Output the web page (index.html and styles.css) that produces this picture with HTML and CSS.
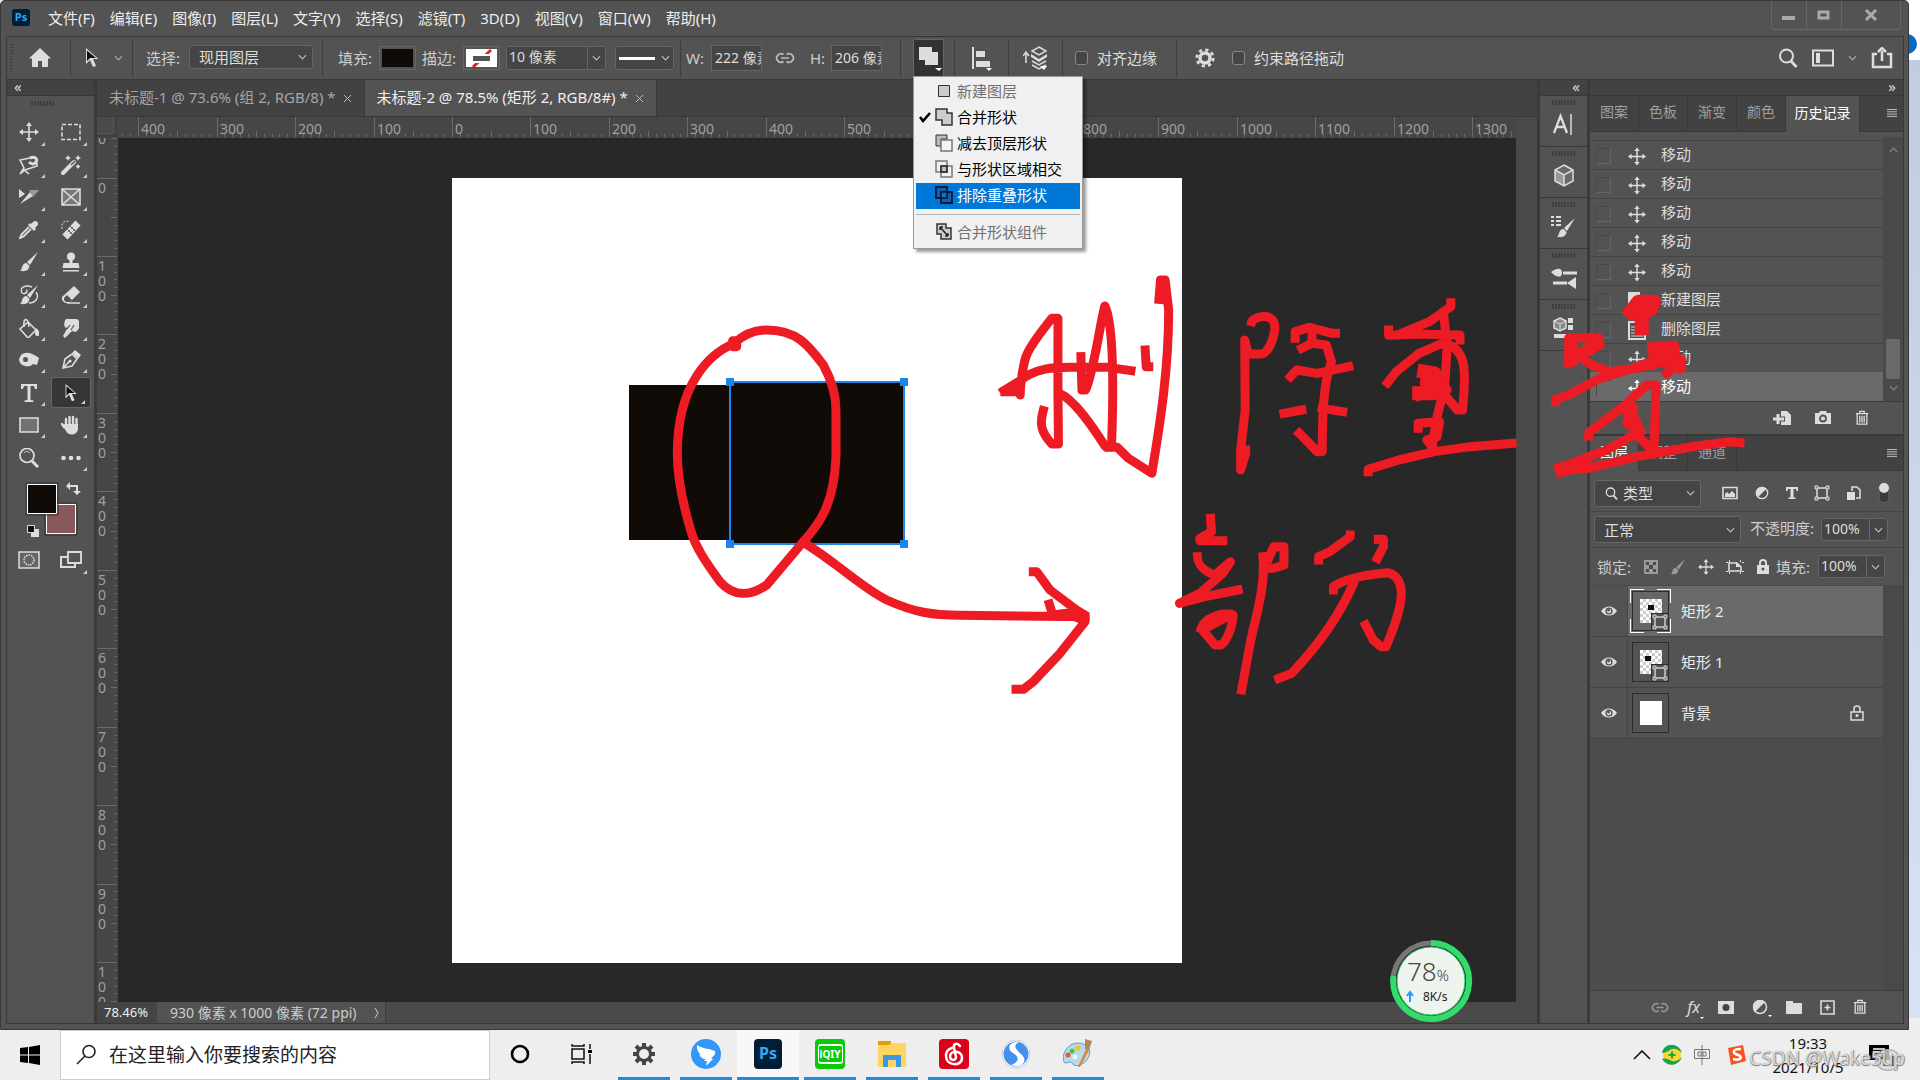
FILE: index.html
```html
<!DOCTYPE html>
<html lang="zh-CN">
<head>
<meta charset="utf-8">
<title>未标题-2 @ 78.5%</title>
<link rel="stylesheet" href="styles.css">
</head>
<body>
<svg class="defs" aria-hidden="true">
  <symbol id="chev" viewBox="0 0 10 6"><path d="M1 1l4 4 4-4" fill="none" stroke="currentColor" stroke-width="1.3"/></symbol>
  <symbol id="move" viewBox="0 0 20 20"><path d="M10 3v14M3 10h14" stroke="currentColor" stroke-width="1.6"/><path d="M10 0l3 4H7zM10 20l3-4H7zM0 10l4-3v6zM20 10l-4-3v6z" fill="currentColor"/></symbol>
  <symbol id="burger" viewBox="0 0 10 8"><path d="M0 .5h10M0 2.8h10M0 5.1h10M0 7.4h10" stroke="currentColor"/></symbol>
  <symbol id="eye" viewBox="0 0 16 12"><path d="M0 6C4 0 12 0 16 6 12 12 4 12 0 6z" fill="currentColor"/><circle cx="8" cy="6" r="3.6" fill="#535353"/><circle cx="8" cy="6" r="2.2" fill="currentColor"/><circle cx="7.600" cy="5" r="1.400" fill="#535353"/></symbol>
  <symbol id="frame" viewBox="0 0 16 16"><path d="M3 3h10v10H3z" fill="none" stroke="currentColor" stroke-width="1.5"/><path d="M1 1h3v3H1zM12 1h3v3h-3zM1 12h3v3H1zM12 12h3v3h-3z" fill="#777" stroke="currentColor"/></symbol>
  <symbol id="trash" viewBox="0 0 16 18"><path d="M1 4h14M5.500 4V1.500h5V4M2.500 4v12h11V4M5.500 6.500v7.500M8 6.500v7.500M10.500 6.500v7.500" fill="none" stroke="currentColor" stroke-width="1.500"/></symbol>
  <symbol id="half" viewBox="0 0 16 16"><circle cx="8" cy="8" r="6.500" fill="none" stroke="currentColor" stroke-width="1.500"/><path d="M13 3A7 7 0 0 0 3 13z" fill="currentColor"/></symbol>
  <symbol id="link" viewBox="0 0 20 12"><path d="M8.500 2.500A4.300 4.300 0 1 0 8.500 9.500M11.500 2.500a4.300 4.300 0 1 1 0 7M6 6h8" fill="none" stroke="currentColor" stroke-width="1.700"/></symbol>
  <symbol id="brush" viewBox="0 0 20 20"><path d="M19 0L8 10l3 3zM7.500 11c-3 0-4 2.500-4.500 4.500-.5 1.500-1 2.500-2 3 4 1.500 9 .5 9.500-4.500z" fill="currentColor"/></symbol>
  <symbol id="arrow" viewBox="0 0 16 22"><path d="M2 1v16l4-4 3 7 3-1-3-7h5.500z" fill="#ddd"/><path d="M3 3.500v10.500l3-3h6z" fill="#111"/></symbol>
  <symbol id="search" viewBox="0 0 20 20"><circle cx="8.500" cy="8" r="6.500" fill="none" stroke="currentColor" stroke-width="2"/><path d="M13 13l5.500 6" stroke="currentColor" stroke-width="2.800"/></symbol>
  <symbol id="gear" viewBox="0 0 20 20"><circle cx="10" cy="10" r="5" fill="none" stroke="currentColor" stroke-width="3.500"/><circle cx="10" cy="10" r="8.200" fill="none" stroke="currentColor" stroke-width="2.800" stroke-dasharray="3.220 3.220"/></symbol>
</svg>

<main class="desktop">
<div class="window">
  <header class="titlebar">
    <span class="ps-logo">Ps</span>
    <nav class="menus">
      <button>文件(F)</button><button>编辑(E)</button><button>图像(I)</button><button>图层(L)</button><button>文字(Y)</button><button>选择(S)</button><button>滤镜(T)</button><button>3D(D)</button><button>视图(V)</button><button>窗口(W)</button><button>帮助(H)</button>
    </nav>
    <div class="controls">
      <button aria-label="最小化"><svg width="14" height="14"><path d="M0 8h13v4H0z" fill="#aaa"/></svg></button>
      <button aria-label="最大化"><svg width="14" height="12"><path d="M2 3h9v6H2z" fill="none" stroke="#aaa" stroke-width="3"/></svg></button>
      <button aria-label="关闭" class="close"><svg width="14" height="12"><path d="M2 1l10 10M12 1L2 11" stroke="#aaa" stroke-width="3"/></svg></button>
    </div>
  </header>

  <div class="options">
    <div class="grp g-home"><i class="vgrip"></i><button aria-label="主页"><svg width="22" height="20" viewBox="0 0 22 20"><path d="M11 0L0 10.500h3V19h6v-6h4v6h6v-8.500h3z" fill="#ddd"/></svg></button></div>
    <div class="grp g-tool"><svg width="16" height="22"><use href="#arrow"/></svg><svg class="dim" width="9" height="6"><use href="#chev"/></svg></div>
    <div class="grp g-select"><label for="scope">选择:</label><span class="sel"><select id="scope"><option>现用图层</option></select><svg width="9" height="6"><use href="#chev"/></svg></span></div>
    <div class="grp g-fill">
      <label>填充:</label><button class="chip" aria-label="填充颜色"><i class="ink"></i></button>
      <label>描边:</label><button class="chip" aria-label="描边颜色"><svg width="31" height="18"><path d="M0 0h31v18H0z" fill="#fff"/><path d="M25 1L7 18" stroke="#e0222c" stroke-width="3"/><path d="M5 5h21v9H5z" fill="#fff"/><path d="M7 7h17v5H7z" fill="#555"/></svg></button>
      <span class="combo w-stroke"><input aria-label="描边宽度" value="10 像素"><button aria-label="展开"><svg width="9" height="6"><use href="#chev"/></svg></button></span>
      <button class="linestyle" aria-label="描边类型"><i></i><svg width="9" height="6"><use href="#chev"/></svg></button>
    </div>
    <div class="grp g-size"><label for="w">W:</label><input id="w" value="222 像素"><svg class="lnk" width="20" height="12"><use href="#link"/></svg><label for="h">H:</label><input id="h" value="206 像素"></div>
    <div class="grp g-op">
      <button class="opbtn" aria-label="路径操作"><svg width="30" height="32"><path d="M5 5h13v5h6v13H11v-5H5z" fill="#ddd"/><path d="M21 26h7l-3 3z" fill="#fff"/></svg></button>
      <menu class="popup">
        <li class="off"><svg width="18" height="18"><path d="M3.500 3.500h11v11h-11z" fill="#ccc" stroke="#333"/></svg>新建图层</li>
        <li><svg class="tick" width="12" height="12"><path d="M1 6l3 4 7-8" fill="none" stroke="#000" stroke-width="2.600"/></svg><svg width="18" height="18"><path d="M1 1h11v4h5v12H7v-5H1z" fill="#ccc" stroke="#333" stroke-width="1.500"/></svg>合并形状</li>
        <li><svg width="18" height="18"><path d="M1 1h11v4H6v7H1z" fill="#bbb" stroke="#333"/><path d="M6 6h11v11H6z" fill="#f4f4f4" stroke="#777" stroke-width="1.500"/></svg>减去顶层形状</li>
        <li><svg width="18" height="18"><path d="M1 1h11v11H1zM6 6h11v11H6z" fill="none" stroke="#777" stroke-width="1.500"/><path d="M6 6h6v6H6z" fill="#bbb" stroke="#222" stroke-width="1.500"/></svg>与形状区域相交</li>
        <li class="on"><svg width="18" height="18"><path d="M1 1h11v11H1zM6 6h11v11H6z" fill="#1260ae" stroke="#061c38" stroke-width="1.800"/><path d="M6 6h6v6H6z" fill="#0078d7" stroke="#061c38" stroke-width="1.500"/></svg>排除重叠形状</li>
        <li class="rule"></li>
        <li class="off"><svg width="18" height="18"><path d="M2 1h9v4h5v11H6v-5H2z" fill="#ccc" stroke="#333" stroke-width="1.500"/><path d="M5 4l8 9M5 4v3M5 4h3M13 13v-3M13 13h-3" stroke="#222" stroke-width="1.500"/></svg>合并形状组件</li>
      </menu>
    </div>
    <div class="grp g-icon"><button aria-label="路径对齐方式"><svg width="22" height="28" viewBox="0 0 22 28"><path d="M2 3v22" stroke="#ddd" stroke-width="2"/><path d="M5 7h9v6H5zM5 17h14v6H5z" fill="#ddd"/><path d="M15 24h6l-3 3z" fill="#fff"/></svg></button></div>
    <div class="grp g-icon"><button aria-label="路径排列方式"><svg width="26" height="26" viewBox="0 0 26 26"><path d="M3 18V9M0 11l3-4 3 4" fill="none" stroke="#ddd" stroke-width="1.500"/><path d="M16 2l7 4-7 4-7-4z" fill="none" stroke="#ddd" stroke-width="1.500"/><path d="M8 9l8 5 8-5v3l-8 5-8-5z" fill="#ddd"/><path d="M9 16l7 4 7-4M9 20l7 4 7-4" fill="none" stroke="#ddd" stroke-width="1.500"/><path d="M17 21h7l-3 4z" fill="#fff"/></svg></button></div>
    <div class="grp g-check"><label><input type="checkbox">对齐边缘</label></div>
    <div class="grp g-last"><svg width="20" height="20" class="lite"><use href="#gear"/></svg><label><input type="checkbox">约束路径拖动</label></div>
    <div class="opt-right">
      <button aria-label="搜索"><svg width="20" height="20"><use href="#search"/></svg></button>
      <button aria-label="工作区"><svg width="22" height="18"><path d="M1 1.500h20v15H1z" fill="none" stroke="#ddd" stroke-width="2"/><path d="M4 4h4v10H4z" fill="#ddd"/></svg></button>
      <svg class="dim" width="9" height="6"><use href="#chev"/></svg>
      <button aria-label="共享"><svg width="22" height="22"><path d="M6 7H2v13h18V7h-4" fill="none" stroke="#ddd" stroke-width="2.500"/><path d="M11 14V4M7 5l4-4 4 4" fill="none" stroke="#ddd" stroke-width="2.500"/></svg></button>
    </div>
  </div>

  <div class="work">
    <aside class="tools">
      <div class="strip left">«</div>
      <i class="hgrip"></i>
      <div class="toolgrid">
        <button aria-label="移动"><svg viewBox="0 0 20 20"><use href="#move"/></svg></button>
        <button aria-label="矩形选框"><svg viewBox="0 0 20 20"><path d="M1 2.500h18v15H1z" fill="none" stroke="#ddd" stroke-width="1.600" stroke-dasharray="4 2"/></svg></button>
        <button aria-label="磁性套索"><svg viewBox="0 0 20 20"><path d="M11 3L1 5l4 8-4 6 5-4 6-2 6-2V8M4 14l6 5" fill="none" stroke="#ddd" stroke-width="1.600"/><path d="M11 3c5-2 8 1 6 4s-5 2-7 0" fill="none" stroke="#ddd" stroke-width="3"/></svg></button>
        <button aria-label="魔棒"><svg viewBox="0 0 20 20"><path d="M2 18L13 7" stroke="#ddd" stroke-width="4" stroke-linecap="round"/><path d="M10 10l4-4" stroke="#555" stroke-width="1.500"/><path d="M7 0l1 2 2 1-2 1-1 2-1-2-2-1 2-1zM17 0l1 2 2 1-2 1-1 2-1-2-2-1 2-1zM17 9l1 1.500 1.500 1-1.500 1-1 1.500-1-1.500-1.500-1 1.500-1z" fill="#ddd"/></svg></button>
        <button aria-label="切片选择"><svg viewBox="0 0 20 20"><path d="M0 2l6 5-6 4zM1 17l10-12 3 4z" fill="#ddd"/><path d="M10 3h10l-6 7z" fill="#999"/></svg></button>
        <button aria-label="图框"><svg viewBox="0 0 20 20"><path d="M1 2h18v16H1zM1 2l18 16M19 2L1 18" fill="#777" stroke="#ddd" stroke-width="1.600"/></svg></button>
        <button aria-label="吸管"><svg viewBox="0 0 20 20"><path d="M10 7L3 14c-1 1-1 2-2 4 2-1 3-1 4-2l7-7" fill="none" stroke="#ddd" stroke-width="1.800"/><path d="M9 5l6 6 2-2-1-1 2-2c3-3-1-7-4-4l-2 2-1-1z" fill="#ddd"/></svg></button>
        <button aria-label="污点修复"><svg viewBox="0 0 20 20"><path d="M4 17L17 3" stroke="#ddd" stroke-width="7"/><path d="M6 9l6 6M9 6l6 6" stroke="#555"/><path d="M7 12l5-5M9 14l5-5" stroke="#555" stroke-dasharray="1 1"/><path d="M1 9V5c0-3 4-5 8-3" fill="none" stroke="#ddd" stroke-dasharray="2 1.500"/></svg></button>
        <button aria-label="画笔"><svg viewBox="0 0 20 20"><use href="#brush"/></svg></button>
        <button aria-label="仿制图章"><svg viewBox="0 0 20 20"><circle cx="10" cy="4.500" r="4" fill="#ddd"/><path d="M8.500 7h3v4h6l1 5H1.500l1-5h6zM2 18h16v1.500H2z" fill="#ddd"/></svg></button>
        <button aria-label="历史记录画笔"><svg viewBox="0 0 20 20"><use href="#brush"/><path d="M3 8C0 1 8 0 13 2M3 8c3 2 7-2 4-3M17 7c4 6-1 11-7 11" fill="none" stroke="#ddd" stroke-width="1.400"/></svg></button>
        <button aria-label="橡皮擦"><svg viewBox="0 0 20 20"><path d="M1 12L13 1l6 6L8 18H4l-3-3z" fill="#ddd"/><path d="M3 13l3-3 5 5-2 2H5l-2-2z" fill="#535353"/><path d="M6 18h13" stroke="#ddd" stroke-width="1.500"/></svg></button>
        <button aria-label="油漆桶"><svg viewBox="0 0 20 20"><path d="M9 4l8 8-8 8-8-9zM5 9c-1-9 4-11 5 0" fill="none" stroke="#ddd" stroke-width="1.600"/><path d="M17 10c6 5 4 8 1 8-3-1-2-4-1-8z" fill="#ddd"/></svg></button>
        <button aria-label="涂抹"><svg viewBox="0 0 20 20"><path d="M5 1h11l2 2v7c-2 5-5 4-7 3l-7 7-2-2 5-9c-4 3-5-4-2-8z" fill="#ddd"/><path d="M6 11l3-4M10 12l3-5" stroke="#555" stroke-width="1.200"/></svg></button>
        <button aria-label="海绵"><svg viewBox="0 0 20 20"><path d="M2 5c5-4 11-2 18 3l-2 7-4-1c-3 4-14 3-14-5z" fill="#ddd"/><circle cx="6.500" cy="9.500" r="2.500" fill="#535353"/></svg></button>
        <button aria-label="钢笔"><svg viewBox="0 0 20 20"><path d="M2 18l2-9 7-5 5 5-5 7zM2 18l7-7" fill="none" stroke="#ddd" stroke-width="1.600"/><circle cx="9" cy="11" r="1.600" fill="#ddd"/><path d="M11 3l3-3 6 5-3 4z" fill="#ddd"/></svg></button>
        <button aria-label="文字"><svg viewBox="0 0 20 20"><path d="M2 1h16v5h-2l-1-3h-3.500v14l3 .5V19h-9v-1.500l3-.5V3H5L4 6H2z" fill="#ddd"/></svg></button>
        <button aria-label="路径选择" class="active"><svg viewBox="-2 0 20 22"><use href="#arrow" width="16" height="22"/></svg></button>
        <button aria-label="矩形"><svg viewBox="0 0 20 20"><path d="M1 3h18v14H1z" fill="#727272" stroke="#ddd" stroke-width="1.600"/></svg></button>
        <button aria-label="抓手"><svg viewBox="0 0 20 20"><path d="M5 12V4M8.500 11V2M12 11V2M15.500 12V4M3 12l-2-3" stroke="#ddd" stroke-width="2.400" stroke-linecap="round"/><path d="M4 9h13v5c-1 7-10 7-12 2l-4-6z" fill="#ddd"/></svg></button>
        <button aria-label="缩放" class="single"><svg viewBox="0 0 20 20"><circle cx="8" cy="7.500" r="7" fill="none" stroke="#ddd" stroke-width="1.700"/><path d="M5 5c1-2 4-2 6 0" fill="none" stroke="#ddd"/><path d="M13 13l6 6" stroke="#ddd" stroke-width="3"/></svg></button>
        <button aria-label="更多"><svg viewBox="0 0 20 20"><circle cx="2.500" cy="10" r="2.300" fill="#ddd"/><circle cx="10" cy="10" r="2.300" fill="#ddd"/><circle cx="17.500" cy="10" r="2.300" fill="#ddd"/></svg></button>
      </div>
      <svg class="colors" width="84" height="96" viewBox="0 0 84 96">
        <path d="M38.500 31.500h29v29h-29z" fill="#87595a" stroke="#fff"/><path d="M37 30h32v32H37z" fill="none" stroke="#333"/>
        <path d="M19.500 11.500h29v29h-29z" fill="#110b08" stroke="#fff"/><path d="M18 10h32v32H18z" fill="none" stroke="#333"/>
        <path d="M61 13h8v7" fill="none" stroke="#ddd" stroke-width="2"/><path d="M62 9v8l-4-4zM65 18h8l-4 4z" fill="#ddd"/>
        <path d="M23 56h8v8h-8z" fill="#ddd"/><path d="M19.500 52.500h7v7h-7z" fill="#111" stroke="#ddd"/>
      </svg>
      <div class="toolgrid modes">
        <button aria-label="快速蒙版" class="single"><svg viewBox="0 0 22 18"><path d="M1 1h20v16H1z" fill="#666" stroke="#ddd" stroke-width="1.500"/><circle cx="11" cy="9" r="5" fill="none" stroke="#ddd" stroke-width="1.500" stroke-dasharray="1.500 1"/></svg></button>
        <button aria-label="屏幕模式"><svg viewBox="0 0 22 18"><path d="M1 6h14v10H1z" fill="none" stroke="#ddd" stroke-width="2"/><path d="M8 1h13v11H8z" fill="#555" stroke="#ddd" stroke-width="1.800"/></svg></button>
      </div>
    </aside>

    <section class="document">
      <div class="doctabs">
        <div class="doctab">未标题-1 @ 73.6% (组 2, RGB/8) *<button aria-label="关闭标签"><svg width="9" height="9"><path d="M1 1l7 7M8 1L1 8" stroke="#bbb"/></svg></button></div>
        <div class="doctab current">未标题-2 @ 78.5% (矩形 2, RGB/8#) *<button aria-label="关闭标签"><svg width="9" height="9"><path d="M1 1l7 7M8 1L1 8" stroke="#bbb"/></svg></button></div>
      </div>
      <div class="stage">
        <div class="corner"></div>
        <svg class="ruler" id="ruler-x"></svg><div class="vbar"></div>
        <svg class="ruler" id="ruler-y"></svg>
        <div class="pasteboard">
          <svg class="artboard" id="artboard" width="730" height="785" viewBox="0 0 730 785">
            <rect width="730" height="785" fill="#fff"/>
            <rect x="177" y="207" width="102" height="155" fill="#110b08"/>
            <rect x="278" y="204" width="174" height="162" fill="#110b08" stroke="#1c84ec" stroke-width="2"/>
            <path d="M274 200h8v8h-8zM448 200h8v8h-8zM274 362h8v8h-8zM448 362h8v8h-8z" fill="#1c84ec"/>
          </svg>
        </div>
        <div class="vbar"></div>
      </div>
      <footer class="status"><span class="zoom">78.46%</span><span class="info">930 像素 x 1000 像素 (72 ppi)<svg width="8" height="12"><path d="M2 1l3 5-3 5" fill="none" stroke="#ccc"/></svg></span></footer>
    </section>

    <aside class="dock">
      <div class="strip right">«</div>
      <button aria-label="字符"><svg width="26" height="26"><path d="M3 21L9.500 4 16 21M5 15h9" fill="none" stroke="#ddd" stroke-width="2.300"/><path d="M20 2v21" stroke="#ddd" stroke-width="1.500"/></svg></button>
      <button aria-label="3D"><svg width="26" height="26"><path d="M13 2l9 5v11l-9 5-9-5V7z" fill="#6a6a6a"/><path d="M4 7l9 5v11l-9-5z" fill="#999"/><path d="M13 2l9 5v11l-9 5-9-5V7zM4 7l9 5 9-5M13 12v11" fill="none" stroke="#ddd" stroke-width="1.500"/></svg></button>
      <button aria-label="画笔设置"><svg width="26" height="26"><path d="M0 3h3M5 3h5M0 7h3M5 7h5M0 11h3M5 11h5" stroke="#ddd" stroke-width="2"/><use href="#brush" x="4" y="4" width="22" height="20"/></svg></button>
      <button aria-label="画笔"><svg width="26" height="26"><path d="M12 8h14M2 18h14" stroke="#ddd" stroke-width="3"/><path d="M0 7c7-5 11-4 11 1s-6 5-11-1zM16 18l9-6v12z" fill="#ddd"/></svg></button>
      <button aria-label="库"><svg width="26" height="26"><path d="M9 2l6 3v7l-6 3-6-3V5z" fill="#888" stroke="#ddd" stroke-width="1.500"/><path d="M3 5l6 3 6-3M9 8v7" stroke="#ddd" fill="none"/><path d="M17 2h5v5h-5zM17 9h5v5h-5zM3 18h19v4H3z" fill="#ddd"/></svg></button>
    </aside>

    <aside class="panels">
      <div class="strip right">»</div>
      <div class="ptabs"><button>图案</button><button>色板</button><button>渐变</button><button>颜色</button><button class="sel-tab">历史记录</button><svg class="burger" width="10" height="8"><use href="#burger"/></svg></div>
      <div class="history">
        <ol>
          <li><i></i><svg width="18" height="19"><use href="#move"/></svg>移动</li>
          <li><i></i><svg width="18" height="19"><use href="#move"/></svg>移动</li>
          <li><i></i><svg width="18" height="19"><use href="#move"/></svg>移动</li>
          <li><i></i><svg width="18" height="19"><use href="#move"/></svg>移动</li>
          <li><i></i><svg width="18" height="19"><use href="#move"/></svg>移动</li>
          <li><i></i><svg width="18" height="19"><path d="M0 0h12v5h6v14H0z" fill="#ddd"/><path d="M3 8h12v9H3z" fill="#666"/></svg>新建图层</li>
          <li><i></i><svg width="18" height="19"><path d="M1 1h10l6 6v11H1z" fill="none" stroke="#ddd" stroke-width="2"/><path d="M3 6h9M3 9h12M3 12h12M3 15h12" stroke="#ddd"/></svg>删除图层</li>
          <li><i></i><svg width="18" height="19"><use href="#move"/></svg>移动</li>
          <li class="now"><i></i><svg width="18" height="19"><use href="#move"/></svg>移动</li>
        </ol>
        <div class="scroll"><svg width="9" height="6" class="flip"><use href="#chev"/></svg><i></i><svg width="9" height="6"><use href="#chev"/></svg></div>
      </div>
      <div class="pfoot hist-foot">
        <button aria-label="从当前状态创建新文档"><svg width="18" height="16"><path d="M8 1h6l4 4v10H8z" fill="#ddd"/><path d="M0 9h12M5 4v10" stroke="#535353" stroke-width="5"/><path d="M0 9h11M5 4v10" stroke="#ddd" stroke-width="3"/></svg></button>
        <button aria-label="创建新快照"><svg width="16" height="14"><path d="M0 2h4l1-2h6l1 2h4v11H0z" fill="#ddd"/><circle cx="8" cy="7.500" r="3" fill="none" stroke="#555" stroke-width="1.800"/></svg></button>
        <button aria-label="删除"><svg width="14" height="16"><use href="#trash"/></svg></button>
      </div>
      <div class="ptabs second"><button class="sel-tab">图层</button><button>调整</button><button>通道</button><svg class="burger" width="10" height="8"><use href="#burger"/></svg></div>
      <div class="prow filter">
        <span class="sel kind"><svg class="mag" width="13" height="13"><use href="#search"/></svg><select aria-label="筛选类型"><option>类型</option></select><svg width="9" height="6"><use href="#chev"/></svg></span>
        <div class="ficons">
          <svg width="16" height="14"><path d="M1 1.500h14v11H1z" fill="none" stroke="#ddd" stroke-width="1.600"/><path d="M3 11V8l2-2 2 2 3-3 3 3v3z" fill="#ddd"/></svg>
          <svg width="14" height="14"><use href="#half"/></svg>
          <svg width="12" height="14"><path d="M0 1h12v4h-1.500l-.5-2H7.500v8.500h2V13h-7v-1.500h2V3H2l-.5 2H0z" fill="#ddd"/></svg>
          <svg width="16" height="16"><use href="#frame"/></svg>
          <svg width="14" height="14"><path d="M5 5V1h5l3 3v8H9" fill="none" stroke="#ddd" stroke-width="1.600"/><path d="M0 6h8v8H0z" fill="#ddd"/></svg>
          <svg width="12" height="22"><rect x="1" y="1" width="10" height="20" rx="5" fill="#3c3c3c" stroke="#666"/><circle cx="6" cy="6" r="5" fill="#ddd"/></svg>
        </div>
      </div>
      <div class="prow blend">
        <span class="sel mode"><select aria-label="混合模式"><option>正常</option></select><svg width="9" height="6"><use href="#chev"/></svg></span>
        <label for="opacity">不透明度:</label><span class="combo pct"><input id="opacity" value="100%"><button aria-label="展开"><svg width="9" height="6"><use href="#chev"/></svg></button></span>
      </div>
      <div class="prow lock">
        <label>锁定:</label>
        <div class="licons">
          <svg width="14" height="14"><path d="M0 0h14v14H0z" fill="#999"/><path d="M2 2h3v3H2zM9 2h3v3H9zM5 5h4v4H5zM2 9h3v3H2zM9 9h3v3H9z" fill="#4a4a4a"/></svg>
          <svg width="16" height="16" class="grey"><use href="#brush"/></svg>
          <svg width="16" height="16"><use href="#move"/></svg>
          <svg width="18" height="14"><path d="M3 3h8l4 4v4H3z" fill="none" stroke="#ddd" stroke-width="1.600"/><path d="M10 2l5 5h-5zM0 2h2v1H0zM0 11h2v1H0zM16 2h2v1h-2zM16 11h2v1h-2zM3 0h1v2H3zM14 0h1v2h-1zM3 12h1v2H3zM14 12h1v2h-1z" fill="#ddd"/></svg>
          <svg width="14" height="16"><path d="M4 7V4c0-4 6-4 6 0v3" fill="none" stroke="#ddd" stroke-width="2"/><path d="M1 6h12v9H1z" fill="#ddd"/><circle cx="7" cy="10" r="1.500" fill="#555"/></svg>
        </div>
        <label for="fillp">填充:</label><span class="combo pct"><input id="fillp" value="100%"><button aria-label="展开"><svg width="9" height="6"><use href="#chev"/></svg></button></span>
      </div>
      <div class="layers">
        <ul>
          <li class="picked"><button aria-label="显示"><svg width="16" height="12"><use href="#eye"/></svg></button><div><span class="thumb"><i class="checker"><b></b></i><svg width="16" height="16"><use href="#frame"/></svg></span>矩形 2</div></li>
          <li><button aria-label="显示"><svg width="16" height="12"><use href="#eye"/></svg></button><div><span class="thumb"><i class="checker one"><b></b></i><svg width="16" height="16"><use href="#frame"/></svg></span>矩形 1</div></li>
          <li><button aria-label="显示"><svg width="16" height="12"><use href="#eye"/></svg></button><div><span class="thumb"><i class="blank"></i></span>背景<svg class="locked" width="14" height="16"><path d="M4 7V4c0-4 6-4 6 0v3M1 7h12v8H1z" fill="none" stroke="#ddd" stroke-width="1.500"/><circle cx="7" cy="10.500" r="1.500" fill="#ddd"/></svg></div></li>
        </ul>
        <div class="lscroll"></div>
      </div>
      <div class="pfoot layer-foot">
        <button aria-label="链接图层" class="grey"><svg width="18" height="11"><use href="#link"/></svg></button>
        <button aria-label="图层样式" class="fx more">fx</button>
        <button aria-label="蒙版"><svg width="16" height="13"><path d="M0 0h16v13H0z" fill="#ddd"/><circle cx="8" cy="6.500" r="3.500" fill="#444"/></svg></button>
        <button aria-label="调整图层" class="more"><svg width="16" height="16"><use href="#half"/></svg></button>
        <button aria-label="新建组"><svg width="16" height="13"><path d="M0 0h7v2h9v11H0z" fill="#ddd"/></svg></button>
        <button aria-label="新建图层"><svg width="15" height="15"><path d="M1 1h13v13H1zM4.500 7.500h6M7.500 4.500v6" fill="none" stroke="#ddd" stroke-width="1.600"/></svg></button>
        <button aria-label="删除图层"><svg width="14" height="16"><use href="#trash"/></svg></button>
      </div>
    </aside>
  </div>
</div>
<div class="behind"><i></i></div>
</main>

<footer class="taskbar">
  <button class="start" aria-label="开始"><svg width="20" height="20"><path d="M0 3l8-1v7.500H0zM9 2l11-2v9.500H9zM0 10.500h8V18l-8-1zM9 10.500h11V20L9 18z"/></svg></button>
  <label class="tasksearch"><svg width="22" height="22"><circle cx="14" cy="7.500" r="6" fill="none" stroke="#222" stroke-width="1.600"/><path d="M10 12l-8 8" stroke="#222" stroke-width="1.600"/></svg><input aria-label="搜索" placeholder="在这里输入你要搜索的内容"></label>
  <div class="apps">
    <button aria-label="Cortana"><svg width="20" height="20"><circle cx="10" cy="10" r="8" fill="none" stroke="#000" stroke-width="2.600"/></svg></button>
    <button aria-label="任务视图"><svg width="22" height="20"><path d="M1 5h12v10H1zM1 0v2h12V0M1 20v-2h12v2M19 0v5M19 10v10" fill="none" stroke="#111" stroke-width="1.500"/><path d="M17 6h4v3h-4z"/></svg></button>
    <button class="run" aria-label="设置"><svg width="24" height="24"><path d="M12 1v22M1 12h22M4 4l16 16M20 4L4 20" stroke="#444" stroke-width="4"/><circle cx="12" cy="12" r="8" fill="#444"/><circle cx="12" cy="12" r="5" fill="#eee"/></svg></button>
    <button class="run" aria-label="钉钉"><svg width="30" height="30"><circle cx="15" cy="15" r="15" fill="#3296fa"/><path d="M6 6c6 4 10 3 18 6 1 3-1 5-4 7l2 1-7 7 1-5h-3c2-2 2-2 0-2-3-1-4-3-5-5 3 1 2 0 0-1-2-2-2-5-2-8z" fill="#fff"/></svg></button>
    <button class="run here" aria-label="Photoshop"><span class="ps-logo big">Ps</span></button>
    <button class="run" aria-label="爱奇艺"><span class="iqiyi"><span>iQIY</span></span></button>
    <button class="run" aria-label="文件资源管理器"><svg width="28" height="26"><path d="M0 0h13v5H0z" fill="#dfa000"/><path d="M0 4h11l2-2h15v24H0z" fill="#ffd562"/><path d="M5 26V14h18v12h-5v-7h-8v7z" fill="#3a98e4"/></svg></button>
    <button class="run" aria-label="网易云音乐"><svg width="30" height="30"><rect width="30" height="30" rx="4" fill="#dd001b"/><path d="M21 7c-3-4-7-2-6 2l2 9c0 4-6 4-6-1 1-6 12-6 12 2 0 9-16 8-16-2 0-4 2-7 6-8" fill="none" stroke="#fff" stroke-width="2.500" stroke-linecap="round"/></svg></button>
    <button class="run" aria-label="搜狗浏览器"><svg width="30" height="30"><circle cx="15" cy="15" r="14" fill="#fff" stroke="#ccc"/><circle cx="15" cy="15" r="12.500" fill="#4490ee"/><path d="M18 3C8 2 5 10 12 14s6 9-2 12c11 4 17-4 11-10S11 7 18 3z" fill="#fff"/></svg></button>
    <button class="run" aria-label="画图"><svg width="30" height="30"><path d="M15 4C4 4-2 16 1 23c2 3 6-2 8 1 2 4 8 3 13-1 8-8 6-18-7-19z" fill="#b5dcee" stroke="#679bb5"/><circle cx="5" cy="16" r="2.500" fill="#e65445"/><circle cx="9" cy="12" r="2.500" fill="#56b944"/><circle cx="15" cy="9" r="2.800" fill="#f1c32c"/><circle cx="12" cy="18" r="2.400" fill="#f8f8f8"/><path d="M15 28l8-18 3 1-9 17z" fill="#dc8732"/><path d="M22 10L22 0l7 2-3 9z" fill="#ad8960"/></svg></button>
  </div>
  <div class="tray">
    <svg width="18" height="10"><path d="M1 9l8-8 8 8" fill="none" stroke="#111" stroke-width="1.600"/></svg>
    <svg width="20" height="20"><circle cx="10" cy="10" r="9" fill="#fbd72b"/><path d="M0 8C2-3 17-3 20 8c-5-5-9-5-12-3S2 8 0 8zM0 14c5 8 16 8 20-2-4 4-7 5-10 4-4-2-7-3-10-2z" fill="#12a450"/><path d="M6.500 10h7M10 6.500v7" stroke="#12a450" stroke-width="2"/></svg>
    <svg width="18" height="20"><path d="M1.500 4.500h15v9h-15zM9 0v20M5 7h3v4H5zM10 7h3v4h-3z" fill="none" stroke="#777"/></svg>
    <svg width="20" height="20" class="sogou"><path d="M1 3l15-3 3 16-15 4z" fill="#f35420"/><path d="M14 4C5 4 5 8 11 10s2 6-5 4" fill="none" stroke="#fff" stroke-width="2.500"/></svg>
    <time class="clock">19:33<br>2021/10/5</time>
    <span class="note"><svg width="20" height="20"><path d="M0 0h20v15h-8v5l-5-5H0z"/><path d="M4 4h12M4 7h12M4 10h8" stroke="#fff" stroke-width="1.500"/></svg><b>11</b></span>
  </div>
  <span class="watermark">CSDN @Wake5up</span>
</footer>

<div class="ball"><svg width="84" height="84"><circle cx="42" cy="42" r="34" fill="#edf3ed"/><circle cx="42" cy="42" r="38" fill="none" stroke="#777" stroke-width="5"/><path d="M42 4a38 38 0 1 1-37.500 33" fill="none" stroke="#31dc6b" stroke-width="6"/><circle cx="42" cy="42" r="34" fill="none" stroke="#28c768"/><path d="M21 63v-9M18 57l3-4 3 4" fill="none" stroke="#2f96ff" stroke-width="2"/></svg><strong>78<small>%</small></strong><em>8K/s</em></div>

<svg class="ink-layer" width="1920" height="1080" aria-hidden="true">
  <g transform="translate(600 300) scale(.33333)">
    <path d="M398 122h12v18h-12zM403 130C440 95 480 90 500 90 590 90 625 135 670 195 700 250 708 300 708 330V470C702 600 670 660 610 725L500 855C450 890 400 890 360 845 320 790 285 740 272 690 245 600 232 520 232 460 232 250 330 160 403 130"/>
    <path d="M615 730C700 780 780 860 860 900 950 940 1000 945 1080 946L1455 950"/>
    <path d="M1300 815h10L1350 870 1430 930 1455 945V965L1380 1060 1300 1145 1270 1168H1248M1348 912L1358 945 1400 940 1430 952"/>
  </g>
  <g transform="translate(960 250) scale(.5102 .33333)">
    <path d="M86 422L115 395C150 350 190 352 220 352H290L335 362M88 425H118V435C118 400 125 330 132 310 145 270 165 235 180 205H192V430L193 582H180C158 545 156 520 163 482"/>
    <path d="M237 320L239 420H246C262 370 278 190 284 168 300 220 302 380 297 590H285C260 530 225 450 195 430"/>
    <path d="M292 592H308L330 625 376 670C390 540 409 370 409 180L402 90H393L390 148M363 300L365 350H370"/>
    <path d="M572 215C575 200 620 180 617 240 612 285 600 312 590 312H565L558 270 559 480 550 600V660L560 610V600"/>
    <path d="M657 265V245L685 232 730 250H736M670 295L690 280 718 285 728 335C712 400 710 500 710 605H700L675 565 665 550M648 380L660 360 700 370 762 350M635 490L670 480M710 475L750 485M690 260V240"/>
    <path d="M962 158V170L920 215 865 250M840 240V256L900 252 980 255V270M948 195L955 285 950 410 935 500 925 590M838 398L855 365 900 310 945 280C1000 290 990 390 985 480H975L950 435M910 370L930 375 910 400 945 400 955 420 910 432 900 438M898 535V520L940 515 935 560 915 570 930 600M800 665V658L860 630 930 605 1000 590 1082 580"/>
    <path class="wide" d="M910 365L930 370 915 395 945 405 930 430 900 430"/>
    <path d="M491 805L493 845 470 865V872H515M465 920C465 950 480 965 500 975L530 935 515 970 470 1030 430 1060 480 1040 545 1020M473 1135C480 1100 520 1085 535 1095 535 1130 520 1185 510 1185H500L475 1140 530 1095"/>
    <path d="M594 920C600 1000 580 1100 570 1170L552 1320M600 955H615L635 945V890H615L605 925"/>
    <path d="M703 930V920L725 905 765 860V855M820 868H830V890L818 925M732 1020V1010C760 980 820 970 840 968 885 990 860 1100 835 1190H825L810 1170 795 1125M770 1005C740 1110 700 1190 650 1270L625 1285"/>
  </g>
  <g transform="translate(1530 100) scale(.33333)">
    <path class="wide" d="M302 635L325 605 372 605 365 625 335 645M335 645V685"/>
    <path d="M116 788V715L205 712 210 735 150 770 185 795 240 815 320 805 400 785 450 790 410 820M116 788L145 760 200 725M76 905V898L115 885 210 835 300 808 400 770M365 740L430 735 435 755 370 795M130 730V785M420 760L455 780V805"/>
    <path class="wide" d="M375 755L430 745 390 775 440 795"/>
    <path d="M176 1008V998L280 920 350 855H378L372 1055 320 1005M96 1115V1105L150 1080 230 1050 330 995 290 970 310 925M100 1112L175 1105 330 1068 500 1038 600 1025 630 1028"/>
    <path class="wide" d="M298 935L322 990M95 1108L165 1088"/>
  </g>
</svg>
<script src="script.js"></script>
</body>
</html>
```
FILE: styles.css
```css
* { box-sizing: border-box; }
html, body { height: 100%; margin: 0; }
body {
  display: flex; flex-direction: column; position: relative; overflow: hidden;
  font: 15px/20px "Noto Sans", "Noto Sans CJK SC", sans-serif; color: #ddd; background: #eee;
}
button, input, select { font: inherit; color: inherit; }
button { background: none; border: 0; padding: 0; display: flex; align-items: center; justify-content: center; }
svg { display: block; flex: none; }
ul, ol, menu { list-style: none; margin: 0; padding: 0; }
i, em, b { font-style: normal; font-weight: 400; }
.defs { position: absolute; width: 0; height: 0; }
.dim { color: #aaa; }
.grey { color: #999; }

/* window frame */
.desktop { flex: 1; min-height: 0; display: flex; }
.window { flex: 1; min-width: 0; display: flex; flex-direction: column; background: #535353; border: 1px solid #383838; border-radius: 5px 5px 0 0; padding: 0 5px 5px; }
.behind { width: 11px; background: linear-gradient(#fff 60px, #c3cbdf 60px, #d6e3f4 1018px, #eee 1018px); overflow: hidden; padding-top: 34px; }
.behind i { display: block; width: 20px; height: 20px; margin-left: -12px; border-radius: 50%; background: #0669c8; }
.titlebar { height: 35px; flex: none; display: flex; align-items: flex-start; }
.ps-logo { width: 18px; height: 17px; margin: 8px 0 0 6px; border-radius: 3px; background: #001e36; color: #31a8ff; font: 700 11px/16px "Noto Sans", sans-serif; text-align: center; }
.menus { display: flex; gap: 15px; margin: 7px 0 0 18px; color: #eee; }
.controls { margin-left: auto; display: flex; height: 29px; border: 1px solid #666; border-top: 0; border-radius: 0 0 4px 4px; margin-right: 2px; }
.controls button { width: 35px; border-right: 1px solid #666; }
.controls .close { width: 58px; border: 0; }

/* options bar */
.options { height: 44px; flex: none; display: flex; align-items: center; border: 1px solid #383838; margin-right: -1px; }
.grp { height: 37px; display: flex; align-items: center; border-right: 1px solid #3e3e3e; flex: none; }
.vgrip { width: 3px; height: 28px; margin: 0 16px 0 3px; background: repeating-linear-gradient(#3c3c3c 0 1px, #535353 1px 3px); }
.g-home { width: 64px; }
.g-tool { width: 62px; padding-left: 13px; gap: 14px; }
.g-select { width: 190px; padding-left: 13px; gap: 8px; }
.g-fill { width: 358px; padding-left: 15px; gap: 6px; }
.g-size { width: 220px; padding-left: 5px; }
.g-op { width: 54px; padding-left: 12px; position: relative; }
.g-icon { width: 54px; justify-content: center; }
.g-check { width: 114px; padding-left: 12px; }
.g-last { border: 0; padding-left: 18px; gap: 17px; }
.grp label { display: flex; align-items: center; }
.g-fill > label, .g-select > label { width: 35px; color: #ccc; }
.lite { color: #ddd; }
.sel { display: grid; align-items: center; height: 25px; background: #454545; border: 1px solid #666; border-radius: 3px; }
.sel > * { grid-area: 1 / 1; }
.sel svg { justify-self: end; margin-right: 5px; pointer-events: none; color: #bbb; }
.sel select { appearance: none; width: 100%; height: 100%; border: 0; background: none; padding: 0 9px; line-height: 20px; }
.g-select .sel { width: 124px; height: 24px; margin-top: -2px; }
.chip { width: 37px; height: 24px; border: 1px solid #666; }
.chip .ink { width: 31px; height: 18px; background: #110b08; }
.combo { display: flex; height: 24px; background: #454545; border: 1px solid #666; border-radius: 3px; }
.combo input { flex: 1; min-width: 0; border: 0; background: none; padding: 0 2px 2px; font-size: 14px; }
.combo button { width: 18px; border-left: 1px solid #666; color: #bbb; }
.w-stroke { width: 100px; }
.linestyle { width: 59px; height: 24px; background: #454545; border: 1px solid #666; border-radius: 3px; gap: 6px; margin-left: 3px; color: #bbb; }
.linestyle i { width: 36px; height: 3px; background: #fff; }
.g-size label { width: 25px; color: #ccc; }
.g-size .lnk { margin: 0 15px 0 13px; color: #bbb; }
.g-size label + input { width: 51px; height: 26px; background: #454545; border: 1px solid #666; padding: 0 0 2px 3px; font-size: 14px; }
.g-size label:last-of-type { width: 21px; }
.opbtn { width: 31px; height: 38px; background: #323232; border: 1px solid #666; border-radius: 2px; }
.grp input[type=checkbox] { appearance: none; width: 13px; height: 14px; margin: 0 9px 0 0; background: #454545; border: 1px solid #888; border-radius: 3px; }
.opt-right { margin-left: auto; display: flex; align-items: center; gap: 14px; padding-right: 10px; color: #ddd; }
.popup { position: absolute; z-index: 5; left: 12px; top: 36px; width: 170px; padding: 2px; background: #f0f0f0; border: 1px solid #999; box-shadow: 3px 3px 3px rgba(0,0,0,.4); color: #000; }
.popup li { display: flex; align-items: center; gap: 4px; height: 26px; padding: 0 0 2px 19px; white-space: nowrap; position: relative; }
.popup .off { color: #707070; }
.popup .on { background: #0078d7; color: #fff; }
.popup .rule { height: 1px; margin: 5px 0; padding: 0; background: #b8b8b8; }
.popup .tick { position: absolute; left: 3px; top: 6px; }

/* work area */
.work { flex: 1; min-height: 0; display: flex; gap: 3px; background: #3a3a3a; margin-right: -1px; border: solid #383838; border-width: 0 1px 1px; }
.strip { height: 16px; flex: none; background: #424242; border-bottom: 1px solid #383838; color: #ddd; font: 15px/12px "Noto Sans", sans-serif; padding: 0 7px; }
.strip.right { text-align: right; }
.tools { width: 87px; background: #535353; flex: none; }
.hgrip { display: block; width: 24px; height: 5px; margin: 5px auto 10px 24px; background: repeating-linear-gradient(90deg, #404040 0 2px, #535353 2px 3px); }
.toolgrid { display: grid; grid-template-columns: 42px 42px; grid-template-rows: repeat(11, 1fr); height: 358px; padding-left: 1px; }
.toolgrid button { position: relative; color: #ddd; }
.toolgrid svg { width: 20px; height: 20px; }
.toolgrid button::after { content: ""; position: absolute; right: 5px; bottom: 3px; border: 2px solid; border-color: transparent #ccc #ccc transparent; }
.toolgrid .single::after { display: none; }
.toolgrid .active { background: #363636; border: 1px solid #666; border-radius: 3px; margin: 1px; }
.toolgrid.modes { grid-template-rows: 34px; height: 34px; margin-top: -26px; }
.modes svg { width: 22px; height: 18px; }
.colors { margin: -1px 0 0 1px; }

.document { flex: 1; min-width: 0; display: flex; flex-direction: column; background: #424242; }
.doctabs { height: 37px; display: flex; flex: none; border-bottom: 1px solid #383838; }
.doctab { display: flex; align-items: center; gap: 6px; padding: 0 10px 2px 12px; border-right: 1px solid #383838; color: #a5a5a5; white-space: nowrap; }
.doctab.current { background: #535353; color: #eee; }
.doctab button { width: 12px; padding-top: 2px; }
.stage { flex: 1; min-height: 0; display: grid; grid-template: 21px minmax(0, 1fr) / 21px minmax(0, 1fr) 21px; }
.corner { background: #4a4a4a; border: dotted #666; border-width: 0 1px 1px 0; margin: 0 4px 4px 0; }
.ruler { width: 100%; height: 100%; overflow: hidden; background: #464646; font-size: 14px; }
.ruler text { fill: #a0a0a0; }
.ruler path { stroke: #6b6b6b; shape-rendering: crispEdges; fill: none; }
.vbar { background: #494949; }
.pasteboard { background: #282828; display: flex; align-items: center; justify-content: center; overflow: hidden; }
.status { height: 21px; flex: none; display: flex; background: #4a4a4a; font-size: 14px; line-height: 21px; }
.zoom { width: 60px; padding-left: 7px; background: #454545; color: #eee; font-size: 13px; }
.info { display: flex; align-items: center; justify-content: space-between; width: 229px; padding: 0 4px 0 13px; background: #535353; border-right: 1px solid #3e3e3e; color: #ccc; white-space: nowrap; }

.dock { width: 47px; flex: none; background: #535353; display: flex; flex-direction: column; }
.dock button { height: 51px; flex: none; border-bottom: 1px solid #383838; flex-direction: column; justify-content: flex-start; gap: 7px; padding-top: 4px; color: #ddd; width: 100%; }
.dock button::before { content: ""; width: 24px; height: 5px; background: repeating-linear-gradient(90deg, #404040 0 2px, #535353 2px 3px); }

/* panels */
.panels { width: 313px; flex: none; background: #535353; display: flex; flex-direction: column; }
.ptabs { height: 36px; flex: none; display: flex; background: #424242; border-bottom: 1px solid #383838; font-size: 14px; color: #a0a0a0; }
.ptabs button { width: 49px; border-right: 1px solid #383838; padding-bottom: 3px; }
.ptabs .sel-tab { background: #535353; color: #fff; margin-bottom: -1px; }
.ptabs .sel-tab:nth-child(5) { width: 74px; }
.burger { margin: 13px 6px 0 auto; color: #bbb; }
.ptabs.second { border-top: 2px solid #383838; height: 37px; }
.history { height: 269px; flex: none; display: flex; }
.history ol { flex: 1; padding: 8px 0 1px; display: grid; grid-auto-rows: 1fr; }
.history li { display: flex; align-items: center; border-top: 1px solid #444; color: #ddd; line-height: 20px; padding-bottom: 3px; }
.history li i { width: 15px; height: 16px; margin: 5px 17px 0 6px; border: 1px solid; border-color: #484848 #666 #666 #484848; }
.history li svg { margin: 6px 15px 0 0; }
.history .now { background: #6a6a6a; color: #fff; border-color: #6a6a6a; }
.scroll { width: 20px; background: #4a4a4a; display: flex; flex-direction: column; align-items: center; padding: 10px 0; margin-top: 5px; color: #888; }
.scroll i { width: 14px; height: 40px; margin: auto 0 6px; border-radius: 2px; background: #696969; }
.flip { transform: rotate(180deg); }
.pfoot { height: 33px; flex: none; display: flex; align-items: center; justify-content: flex-end; border-top: 1px solid #3c3c3c; color: #ddd; }
.hist-foot { gap: 24px; padding-right: 34px; }
.prow { display: flex; align-items: center; border-bottom: 1px solid #444; padding-left: 4px; flex: none; }
.filter { height: 41px; padding-top: 4px; }
.kind { width: 107px; height: 27px; }
.kind select { padding-left: 28px; }
.sel .mag { justify-self: start; margin-left: 10px; color: #ddd; }
.ficons { flex: 1; display: flex; align-items: center; justify-content: space-between; padding: 0 13px 0 21px; color: #ddd; }
.blend { height: 36px; }
.mode { width: 147px; height: 27px; margin-right: 9px; }
.blend label { width: 71px; color: #ccc; margin-top: -3px; white-space: nowrap; }
.pct { width: 67px; height: 23px; }
.lock { height: 37px; border: 0; }
.lock > label { color: #ccc; margin-left: 3px; width: 40px; white-space: nowrap; }
.licons { display: flex; gap: 12px; align-items: center; width: 139px; padding-left: 7px; color: #ddd; }
.lock .licons + label { margin-left: 0; width: 42px; }
.layers { flex: 1; min-height: 0; display: flex; background: #4d4d4d; border-top: 1px solid #4a4a4a; }
.layers ul { flex: 1; }
.layers li { height: 51px; display: flex; background: #535353; border-bottom: 1px solid #434343; color: #eee; }
.layers li > button { width: 38px; border-right: 1px solid #464646; color: #ddd; }
.layers li > div { flex: 1; display: flex; align-items: center; padding-left: 4px; gap: 12px; }
.layers .picked > div { background: #6a6a6a; }
.thumb { width: 37px; height: 40px; border: 1px solid #2c2c2c; position: relative; background: #535353; display: flex; align-items: center; justify-content: center; }
.thumb svg { position: absolute; right: 0; bottom: 0; background: #535353; color: #ccc; outline: 1px solid #2c2c2c; }
.picked .thumb { background: #666; }
.picked .thumb::before { content: ""; position: absolute; inset: -3px; background: linear-gradient(#fff, #fff) 0 0/14px 1px, linear-gradient(#fff, #fff) 100% 0/14px 1px, linear-gradient(#fff, #fff) 0 100%/14px 1px, linear-gradient(#fff, #fff) 100% 100%/14px 1px, linear-gradient(#fff, #fff) 0 0/1px 14px, linear-gradient(#fff, #fff) 100% 0/1px 14px, linear-gradient(#fff, #fff) 0 100%/1px 14px, linear-gradient(#fff, #fff) 100% 100%/1px 14px; background-repeat: no-repeat; }
.checker, .blank { width: 22px; height: 24px; background: #fff; }
.checker { background: repeating-conic-gradient(#ccc 0 25%, #fff 0 50%) 0 0/6px 6px; padding: 6px 8px; }
.checker.one { padding-left: 5px; }
.checker b { display: block; width: 6px; height: 5px; background: #110b08; }
.locked { margin-left: auto; margin-right: 19px; }
.lscroll { width: 20px; background: #494949; }
.layer-foot { gap: 18px; padding-right: 36px; }
.fx { font: italic 16px/20px "Noto Sans", sans-serif; }
.more { position: relative; }
.more::after { content: ""; position: absolute; right: -4px; bottom: -4px; border: 2px solid transparent; border-top-color: #fff; }

/* taskbar */
.taskbar { height: 50px; flex: none; position: relative; display: flex; background: #eee; color: #111; }
.start { width: 60px; }
.tasksearch { width: 430px; display: flex; align-items: center; gap: 12px; padding-left: 14px; background: #fff; border: 1px solid #ccc; }
.tasksearch input { flex: 1; min-width: 0; border: 0; padding: 0; background: none; font-size: 19px; }
.tasksearch input::placeholder { color: #222; opacity: 1; }
.apps { display: flex; margin-left: -1px; }
.apps button { width: 62px; height: 50px; border-bottom: 3px solid transparent; }
.apps button.run { width: 52px; margin: 0 5px; border-color: #2a88cc; }
.apps button.run.here { width: 62px; margin: 0; background: #f8f8f8; }
.ps-logo.big { width: 28px; height: 30px; margin: 0; border-radius: 4px; font-size: 16px; line-height: 28px; }
.iqiyi { width: 30px; height: 30px; border-radius: 4px; background: #08ca08; color: #fff; display: grid; place-items: center; }
.iqiyi span { width: 25px; border: solid #fff; border-width: 2px 1px; border-radius: 3px; font: 700 10px/16px "Noto Sans", sans-serif; text-align: center; }
.tray { margin-left: auto; display: flex; align-items: center; gap: 11px; }
.sogou { margin-left: 5px; }
.clock { width: 100px; text-align: center; line-height: 24px; }
.note { display: flex; width: 51px; position: relative; }
.note b { position: absolute; left: 6px; top: 4px; width: 26px; height: 22px; border: 1px solid #aaa; border-radius: 50%; background: rgba(215,215,215,.8); font: 15px/20px "Noto Sans", sans-serif; text-align: center; }
.watermark { position: absolute; right: 15px; top: 16px; color: rgba(255,255,255,.7); font-size: 19px; line-height: 24px; text-shadow: 0 1px 1px #777, 1px 0 1px #888; }

/* floating monitor and pen marks */
.ball { position: absolute; left: 1389px; top: 939px; width: 84px; height: 84px; color: #444; }
.ball strong { position: absolute; left: 18px; top: 16px; font-weight: 300; font-size: 26px; line-height: 32px; }
.ball small { font-size: 15px; }
.ball em { position: absolute; left: 34px; top: 50px; font-size: 12px; line-height: 16px; color: #222; }
.ink-layer { position: absolute; left: 0; top: 0; z-index: 10; pointer-events: none; }
.ink-layer path { fill: none; stroke: #ed1c24; stroke-width: 9; stroke-linecap: square; stroke-linejoin: round; vector-effect: non-scaling-stroke; }
.ink-layer .wide { stroke-width: 14; }
```
FILE: script.js
```js
// Draws the document rulers, with zero at the artboard's top left corner.
const ZOOM = 0.7846;
const board = document.getElementById('artboard').getBoundingClientRect();

function drawRuler(id, horizontal) {
  const svg = document.getElementById(id);
  const box = svg.getBoundingClientRect();
  const origin = horizontal ? board.left - box.left : board.top - box.top;
  const length = horizontal ? box.width : box.height;
  const ns = 'http://www.w3.org/2000/svg';
  let d = '';
  for (let v = -800; v <= 1600; v += 10) {
    const p = Math.round(origin + v * ZOOM);
    if (p < -60 || p > length) continue;
    const size = v % 100 === 0 ? 21 : v % 50 === 0 ? 6 : 3;
    d += horizontal ? `M${p + 0.5} ${20 - size}V20` : `M${20 - size} ${p + 0.5}H20`;
    if (v % 100 !== 0) continue;
    const label = String(Math.abs(v));
    const parts = horizontal ? [label] : [...label];
    parts.forEach((part, i) => {
      const x = horizontal ? p + 3 : 1;
      const y = horizontal ? 17 : p + 15 + i * 15;
      if (x < 0 || y < 5 || (!horizontal && y > length + 8)) return;
      const t = document.createElementNS(ns, 'text');
      t.setAttribute('x', x);
      t.setAttribute('y', y);
      t.textContent = part;
      svg.appendChild(t);
    });
  }
  const path = document.createElementNS(ns, 'path');
  path.setAttribute('d', d);
  svg.prepend(path);
}
drawRuler('ruler-x', true);
drawRuler('ruler-y', false);
```
